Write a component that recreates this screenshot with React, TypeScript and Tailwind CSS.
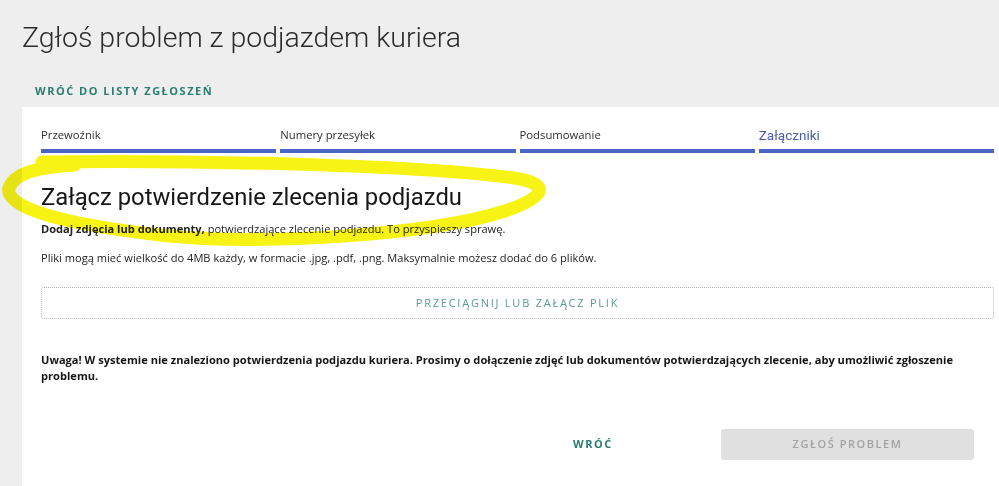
import React from 'react';

const steps = ['Przewoźnik', 'Numery przesyłek', 'Podsumowanie', 'Załączniki'];

const Highlight: React.FC = () => (
  <svg
    className="pointer-events-none absolute left-0 top-0 mix-blend-multiply"
    width="560"
    height="260"
    viewBox="0 0 560 260"
    fill="none"
  >
    <path
      d="M 42 162 C 200 160, 420 165, 514 178 C 552 184, 546 197, 505 211 C 430 235, 260 246, 160 235 C 70 225, 4 209, 9 188 C 14 173, 38 167, 75 165"
      stroke="#f7f314"
      strokeWidth="13"
      strokeLinecap="round"
      strokeLinejoin="round"
    />
  </svg>
);

const App: React.FC = () => {
  return (
    <div className="relative min-h-[486px] w-[999px] overflow-hidden bg-[#eeeeee] font-['Open_Sans',sans-serif] text-[#222]">
      <h1 className="ml-[22px] pt-[20px] font-['Roboto',sans-serif] text-[28.5px] font-light leading-[36px] text-[#2b2b2b]">
        Zgłoś problem z podjazdem kuriera
      </h1>

      <div className="ml-[35px] mt-[27px] text-[11px] font-bold uppercase leading-[16px] tracking-[1.5px] text-[#2a7d70]">
        Wróć do listy zgłoszeń
      </div>

      <div className="ml-[22px] mt-[8px] h-[379px] bg-white pl-[19px] pr-[5px] pt-[18px]">
        <div className="grid grid-cols-4 gap-[4px]">
          {steps.map((s, i) => (
            <div key={s}>
              <div
                className={
                  i === 3
                    ? "font-['Roboto',sans-serif] text-[13.5px] leading-[20px] text-[#4c5ea8]"
                    : 'text-[11.3px] leading-[20px] text-[#2e2e2e]'
                }
              >
                {s}
              </div>
              <div className="mt-[4px] h-[4px] bg-[#4a64c7]" />
            </div>
          ))}
        </div>

        <h2 className="mt-[29px] font-['Roboto',sans-serif] text-[23.8px] font-normal leading-[30px] text-[#161616]">
          Załącz potwierdzenie zlecenia podjazdu
        </h2>

        <p className="mt-[8px] text-[11.1px] leading-[17px] text-[#222]">
          <span className="font-bold">Dodaj zdjęcia lub dokumenty,</span> potwierdzające zlecenie podjazdu. To
          przyspieszy sprawę.
        </p>
        <p className="mt-[12px] text-[11.1px] leading-[17px] text-[#222]">
          Pliki mogą mieć wielkość do 4MB każdy, w formacie .jpg, .pdf, .png. Maksymalnie możesz dodać do 6 plików.
        </p>

        <div className="mt-[21px] flex h-[32px] items-center justify-center rounded-[3px] border border-dotted border-[#b3b3b3] text-[11px] uppercase tracking-[0.16em] text-[#5a9a90]">
          Przeciągnij lub załącz plik
        </div>

        <p className="mt-[33px] pr-[10px] text-[11.1px] font-bold leading-[16px] text-[#161616]">
          Uwaga! W systemie nie znaleziono potwierdzenia podjazdu kuriera. Prosimy o dołączenie zdjęć lub dokumentów
          potwierdzających zlecenie, aby umożliwić zgłoszenie problemu.
        </p>

        <div className="mr-[20px] mt-[45px] flex justify-end gap-[1px]">
          <button className="flex h-[31px] w-[254px] items-center justify-center text-[11px] font-bold uppercase tracking-[0.14em] text-[#2a7d70]">
            Wróć
          </button>
          <button className="flex h-[31px] w-[253px] items-center justify-center rounded-[3px] bg-[#e0e0e0] text-[11px] font-semibold uppercase tracking-[0.14em] text-[#a2a2a2]">
            Zgłoś problem
          </button>
        </div>
      </div>

      <Highlight />
    </div>
  );
};

export default App;
